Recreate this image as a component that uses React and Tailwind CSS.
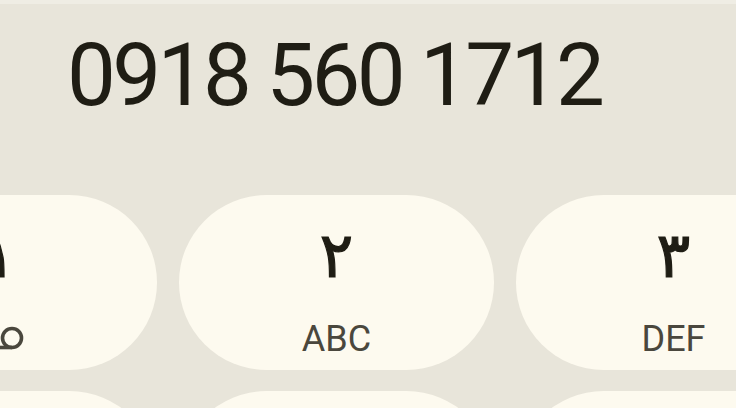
import React from "react";

function Voicemail() {
  return (
    <svg width="48" height="26" viewBox="-24 -13 48 26" className="block">
      <circle cx="-12" cy="-1" r="9.5" fill="none" stroke="#4a473d" strokeWidth="3.6" />
      <circle cx="12" cy="-1" r="9.5" fill="none" stroke="#4a473d" strokeWidth="3.6" />
      <line x1="-12" y1="8.5" x2="12" y2="8.5" stroke="#4a473d" strokeWidth="3.6" />
    </svg>
  );
}

function Key({ digit, sub }) {
  return (
    <div className="w-[315px] h-[175px] shrink-0 rounded-full bg-[#fdfaef] flex flex-col items-center pt-[24px]">
      <div className="h-[72px] flex items-center text-[63px] leading-none text-[#1f1d14] [-webkit-text-stroke:1.2px_#1f1d14] font-['DejaVu_Sans',sans-serif]">
        {digit}
      </div>
      <div className="h-[44px] mt-[26px] flex items-center text-[36px] leading-none text-[#4a473d] font-['Roboto',sans-serif]">
        {sub}
      </div>
    </div>
  );
}

export default function App() {
  return (
    <div className="w-[736px] h-[408px] overflow-hidden bg-[#e8e5da] flex flex-col">
      <div className="h-[4px] bg-[#efede4] shrink-0" />
      <div className="h-[191px] shrink-0 pl-[67px] pt-[28px]">
        <div className="text-[87px] leading-none tracking-[-3.6px] text-[#1f1d14] font-['Roboto',sans-serif] whitespace-nowrap">
          0918 560 1712
        </div>
      </div>
      <div className="flex flex-col gap-[21px]">
        <div className="flex gap-[22px] ml-[-158px]">
          <Key digit="۱" sub={<Voicemail />} />
          <Key digit="۲" sub="ABC" />
          <Key digit="۳" sub="DEF" />
        </div>
        <div className="flex gap-[22px] ml-[-158px]">
          <Key digit="۴" sub="GHI" />
          <Key digit="۵" sub="JKL" />
          <Key digit="۶" sub="MNO" />
        </div>
      </div>
    </div>
  );
}
